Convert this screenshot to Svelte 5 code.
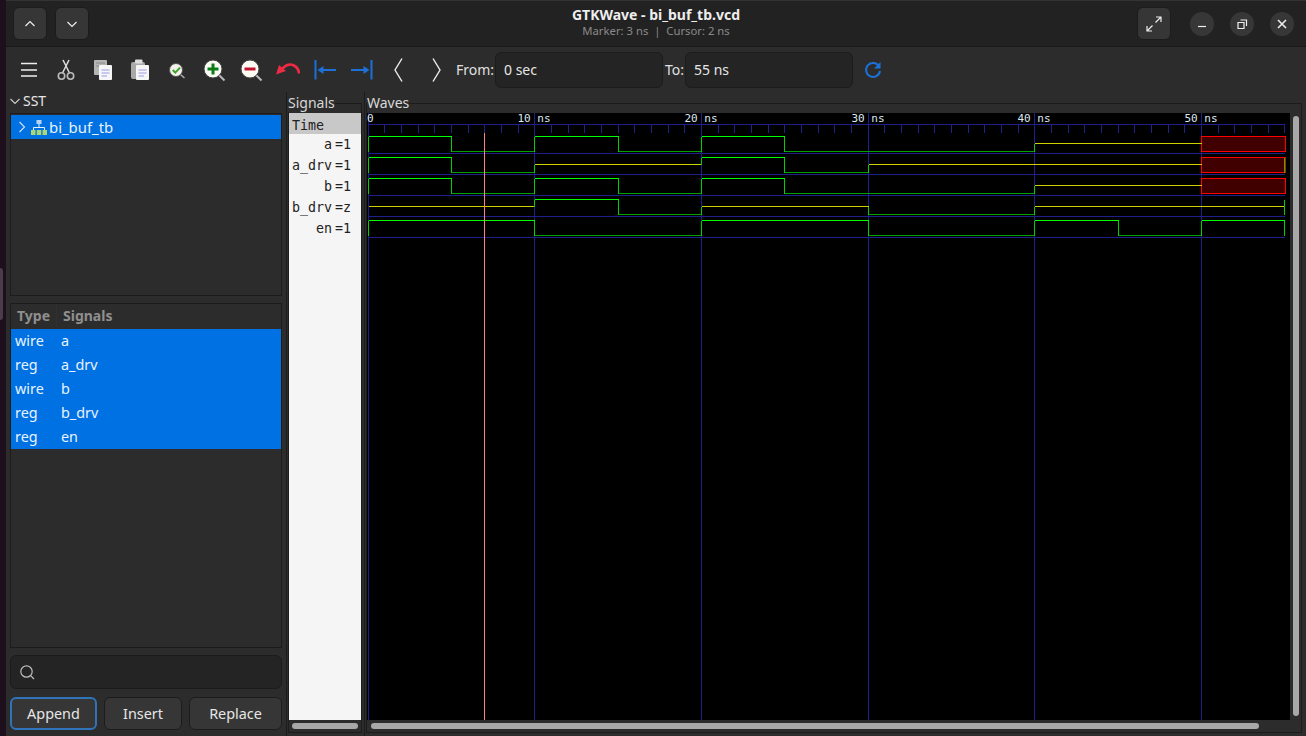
<script lang="ts">
  type Val = 0 | 1 | 'z' | 'x';
  interface Trace {
    name: string;
    type: string;
    value: string;
    steps: [number, Val][];
    endMark: boolean;
  }

  const traces: Trace[] = [
    { name: 'a', type: 'wire', value: '1', endMark: false,
      steps: [[0, 1], [5, 0], [10, 1], [15, 0], [20, 1], [25, 0], [40, 'z'], [50, 'x']] },
    { name: 'a_drv', type: 'reg', value: '1', endMark: true,
      steps: [[0, 1], [5, 0], [10, 'z'], [20, 1], [25, 0], [30, 'z'], [50, 'x']] },
    { name: 'b', type: 'wire', value: '1', endMark: false,
      steps: [[0, 1], [5, 0], [10, 1], [15, 0], [20, 1], [25, 0], [40, 'z'], [50, 'x']] },
    { name: 'b_drv', type: 'reg', value: 'z', endMark: true,
      steps: [[0, 'z'], [10, 1], [15, 0], [20, 'z'], [30, 0], [40, 'z']] },
    { name: 'en', type: 'reg', value: '1', endMark: true,
      steps: [[0, 1], [10, 0], [20, 1], [30, 0], [40, 1], [45, 0], [50, 1]] },
  ];

  const END = 55;
  const px = (t: number) => Math.floor(368 + t * 16.67) + 0.5;
  const rowY = (row: number, v: Val) => {
    const top = 136.5 + row * 21;
    if (v === 1) return top;
    if (v === 0) return top + 15;
    return top + 7;
  };

  const minorTicks = Array.from({ length: END + 1 }, (_, i) => i);
  const majorTicks = [0, 10, 20, 30, 40, 50];
  const rulerLabels = [10, 20, 30, 40, 50];
  const levelColor = { 1: '#00ff00', 0: '#00a000', z: '#d0d000' } as Record<string, string>;

  const wave = traces.map((tr, row) => {
    const flats: { x1: number; x2: number; y: number; color: string }[] = [];
    const edges: { x: number; y1: number; y2: number }[] = [];
    const boxes: { x: number; w: number; y: number; h: number }[] = [];
    tr.steps.forEach(([t, v], i) => {
      const next = i + 1 < tr.steps.length ? tr.steps[i + 1][0] : END;
      const x1 = px(t);
      const x2 = px(next);
      if (v === 'x') {
        boxes.push({ x: x1, w: x2 - x1 + 1, y: rowY(row, 1), h: 15 });
      } else {
        flats.push({ x1, x2, y: rowY(row, v), color: levelColor[v] });
        const prev = i > 0 ? tr.steps[i - 1][1] : v === 1 ? 0 : v;
        if (prev !== v) edges.push({ x: x1, y1: rowY(row, prev), y2: rowY(row, v) });
      }
    });
    if (tr.endMark) edges.push({ x: px(END), y1: rowY(row, 1), y2: rowY(row, 0) });
    return { flats, edges, boxes };
  });
</script>

<div class="screen">
  <div class="strip"><span class="notch"></span></div>
  <div class="window">
    <header class="titlebar">
      <div class="tb-left">
        <button class="hbtn" aria-label="Up">
          <svg width="16" height="16" viewBox="0 0 16 16"><path d="M3.5 10 L8 5.5 L12.5 10" class="thin" /></svg>
        </button>
        <button class="hbtn" aria-label="Down">
          <svg width="16" height="16" viewBox="0 0 16 16"><path d="M3.5 6 L8 10.5 L12.5 6" class="thin" /></svg>
        </button>
      </div>
      <div class="tb-title">
        <div class="title">GTKWave - bi_buf_tb.vcd</div>
        <div class="subtitle">Marker: 3 ns&nbsp; |&nbsp; Cursor: 2 ns</div>
      </div>
      <div class="tb-right">
        <button class="hbtn expand" aria-label="Fullscreen">
          <svg width="18" height="18" viewBox="0 0 18 18">
            <path d="M10.5 7.5 L16 2 M11 2 H16 V7 M7.5 10.5 L2 16 M2 11 V16 H7" class="thin" />
          </svg>
        </button>
        <button class="wbtn" aria-label="Minimize">
          <svg width="12" height="12" viewBox="0 0 12 12"><path d="M2 8.5 H10" class="thin" /></svg>
        </button>
        <button class="wbtn" aria-label="Maximize">
          <svg width="12" height="12" viewBox="0 0 12 12">
            <path d="M2 4.5 H8 V10.5 H2 Z M4.5 2 H10.5 V8" class="thin" />
          </svg>
        </button>
        <button class="wbtn" aria-label="Close">
          <svg width="12" height="12" viewBox="0 0 12 12"><path d="M2 2 L10 10 M10 2 L2 10" class="thick" /></svg>
        </button>
      </div>
    </header>

    <div class="toolbar">
      <button class="tool" aria-label="Menu">
        <svg width="24" height="24" viewBox="0 0 24 24"><path d="M4 5.5 H20 M4 12 H20 M4 18 H20" fill="none" stroke="#eee" stroke-width="1.6" /></svg>
      </button>
      <button class="tool" aria-label="Cut">
        <svg width="24" height="24" viewBox="0 0 24 24">
          <path d="M9 2 L15.5 15 M15 2 L8.5 15" fill="none" stroke="#ddd" stroke-width="1.5" />
          <circle cx="7.5" cy="18" r="3.2" fill="none" stroke="#bbb" stroke-width="1.6" />
          <circle cx="16.5" cy="18" r="3.2" fill="none" stroke="#bbb" stroke-width="1.6" />
        </svg>
      </button>
      <button class="tool" aria-label="Copy">
        <svg width="24" height="24" viewBox="0 0 24 24">
          <rect x="3" y="2" width="13" height="15" rx="1" fill="#b5b5b5" />
          <path d="M5 5 H14 M5 8 H14" stroke="#8a8a8a" />
          <rect x="8" y="7" width="13" height="15" rx="1" fill="#f6f6f6" />
          <path d="M10.5 12 H18.5 M10.5 15 H18.5 M10.5 18 H16" stroke="#9a9aea" />
        </svg>
      </button>
      <button class="tool" aria-label="Paste">
        <svg width="24" height="24" viewBox="0 0 24 24">
          <rect x="3" y="4" width="14" height="17" rx="2" fill="#a9a9a9" />
          <rect x="7" y="1.5" width="7.5" height="4" rx="1" fill="#dedede" />
          <rect x="8" y="7" width="13" height="15" rx="1" fill="#f6f6f6" />
          <path d="M10.5 12 H18.5 M10.5 15 H18.5 M10.5 18 H16" stroke="#9a9aea" />
        </svg>
      </button>
      <button class="tool" aria-label="Zoom fit">
        <svg width="24" height="24" viewBox="0 0 24 24">
          <path d="M15.5 16.5 L19.5 20" stroke="#aaa" stroke-width="1.6" />
          <circle cx="11" cy="12" r="6.5" fill="#f2f2ea" stroke="#555" />
          <path d="M7.8 12 L10.3 14.6 L15 9.6" fill="none" stroke="#3aa02a" stroke-width="2" />
        </svg>
      </button>
      <button class="tool" aria-label="Zoom in">
        <svg width="24" height="24" viewBox="0 0 24 24">
          <path d="M17 17 L22.5 22.5" stroke="#bbb" stroke-width="2" />
          <circle cx="11" cy="11" r="9" fill="#fbfbf4" stroke="#444" />
          <path d="M5.5 11 H16.5 M11 5.5 V16.5" stroke="#0b7d16" stroke-width="3" />
        </svg>
      </button>
      <button class="tool" aria-label="Zoom out">
        <svg width="24" height="24" viewBox="0 0 24 24">
          <path d="M17 17 L22.5 22.5" stroke="#bbb" stroke-width="2" />
          <circle cx="11" cy="11" r="9" fill="#fbfbf4" stroke="#444" />
          <path d="M5.5 11 H16.5" stroke="#c4122f" stroke-width="3" />
        </svg>
      </button>
      <button class="tool" aria-label="Undo zoom">
        <svg width="24" height="24" viewBox="0 0 24 24">
          <path d="M23 15.5 C22.5 8 14 2.5 6.5 10.5" fill="none" stroke="#ed2b45" stroke-width="2.6" />
          <path d="M0 16.5 L3 7 L10 13 Z" fill="#ed2b45" />
        </svg>
      </button>
      <button class="tool" aria-label="Go to start">
        <svg width="24" height="24" viewBox="0 0 24 24">
          <path d="M2.5 2 V21.5 M23 12 H8" fill="none" stroke="#1c71d8" stroke-width="2" />
          <path d="M4.5 12 L10.5 8 V16 Z" fill="#1c71d8" />
        </svg>
      </button>
      <button class="tool" aria-label="Go to end">
        <svg width="24" height="24" viewBox="0 0 24 24">
          <path d="M21.5 2 V21.5 M1 12 H16" fill="none" stroke="#1c71d8" stroke-width="2" />
          <path d="M19.5 12 L13.5 8 V16 Z" fill="#1c71d8" />
        </svg>
      </button>
      <button class="tool" aria-label="Shift left">
        <svg width="24" height="24" viewBox="0 0 24 24"><path d="M15 0.5 L8 12 L15 23.5" fill="none" stroke="#eee" stroke-width="1.4" /></svg>
      </button>
      <button class="tool" aria-label="Shift right">
        <svg width="24" height="24" viewBox="0 0 24 24"><path d="M9 0.5 L16 12 L9 23.5" fill="none" stroke="#eee" stroke-width="1.4" /></svg>
      </button>
      <span class="range-label from">From:</span>
      <input class="range" value="0 sec" />
      <span class="range-label to">To:</span>
      <input class="range" value="55 ns" />
      <button class="tool refresh" aria-label="Reload">
        <svg width="24" height="24" viewBox="0 0 24 24">
          <path d="M18.2 8.5 A7 7 0 1 0 19 13" fill="none" stroke="#1c71d8" stroke-width="2" />
          <path d="M19.5 4 V10.5 H13 Z" fill="#1c71d8" />
        </svg>
      </button>
    </div>

    <div class="panes">
      <aside class="sidebar">
        <div class="sst-head">
          <svg width="10" height="10" viewBox="0 0 10 10"><path d="M0.5 3 L5 7.5 L9.5 3" fill="none" stroke="#ccc" stroke-width="1.1" /></svg>
          <span>SST</span>
        </div>
        <div class="box tree">
          <div class="tree-row">
            <svg class="expander" width="8" height="12" viewBox="0 0 8 12"><path d="M1.5 1 L6.5 6 L1.5 11" fill="none" stroke="#cfe4ff" stroke-width="1.1" /></svg>
            <svg class="tree-icon" width="16" height="15" viewBox="0 0 16 15">
              <rect x="5.5" y="0" width="5" height="4" fill="#b9d7f5" />
              <path d="M8 4 V8 M2.5 10 V7.5 H13.5 V10" fill="none" stroke="#e8f0f8" />
              <rect x="0" y="10" width="4.5" height="5" fill="#a8d878" />
              <rect x="5.75" y="10" width="4.5" height="5" fill="#a8d878" />
              <rect x="11.5" y="10" width="4.5" height="5" fill="#a8d878" />
            </svg>
            <span class="tree-label">bi_buf_tb</span>
          </div>
        </div>
        <div class="hsep"></div>
        <div class="box list">
          <div class="list-head">
            <span class="col-type">Type</span>
            <span class="col-name">Signals</span>
          </div>
          {#each traces as tr}
            <div class="list-row">
              <span class="cell-type">{tr.type}</span>
              <span>{tr.name}</span>
            </div>
          {/each}
        </div>
        <div class="search">
          <svg width="17" height="17" viewBox="0 0 17 17">
            <circle cx="7.5" cy="7.5" r="5.7" fill="none" stroke="#bbb" stroke-width="1.2" />
            <path d="M11.6 11.6 L15 15" stroke="#bbb" stroke-width="1.3" />
          </svg>
        </div>
        <div class="actions">
          <button class="action append">Append</button>
          <button class="action insert">Insert</button>
          <button class="action replace">Replace</button>
        </div>
      </aside>

      <section class="signals">
        <span class="legend">Signals</span>
        <div class="frame">
          <div class="signal-list">
            <div class="time-row">Time</div>
            {#each traces as tr}
              <div class="signal-row">
                <span class="sig-name">{tr.name}</span><span class="sig-value">={tr.value}</span>
              </div>
            {/each}
          </div>
          <div class="hscroll"><span class="thumb sig-thumb"></span></div>
        </div>
      </section>

      <section class="waves">
        <span class="legend">Waves</span>
        <div class="frame">
          <div class="wave-top">
            <svg class="canvas" width="923" height="607" viewBox="367 113 923 607" shape-rendering="crispEdges">
              {#each minorTicks as t}
                <line x1={px(t)} x2={px(t)} y1="124" y2="133" stroke="#20208c" />
              {/each}
              <line x1="368" x2="1285" y1="124.5" y2="124.5" stroke="#20208c" />
              {#each majorTicks as t}
                <line x1={px(t)} x2={px(t)} y1="113" y2="720" stroke="#20208c" />
              {/each}
              {#each traces as _, row}
                <line x1="368" x2="1285" y1={153.5 + row * 21} y2={153.5 + row * 21} stroke="#20208c" />
              {/each}
              <text class="ruler" x="367" y="122">0</text>
              {#each rulerLabels as t}
                <text class="ruler" x={px(t) - 17} y="122">{t} ns</text>
              {/each}
              {#each wave as w}
                {#each w.boxes as b}
                  <rect x={b.x} y={b.y} width={b.w} height={b.h} fill="#400000" stroke="#ff0000" />
                {/each}
                {#each w.flats as f}
                  <line x1={f.x1} x2={f.x2} y1={f.y} y2={f.y} stroke={f.color} />
                {/each}
                {#each w.edges as e}
                  <line x1={e.x} x2={e.x} y1={e.y1} y2={e.y2} stroke="#00d000" />
                {/each}
              {/each}
              <line x1="484.5" x2="484.5" y1="133" y2="720" stroke="#ff8080" />
            </svg>
            <div class="vscroll"><span class="thumb v-thumb"></span></div>
          </div>
          <div class="hscroll"><span class="thumb wave-thumb"></span></div>
        </div>
      </section>
    </div>
  </div>
</div>

<style>
  :global(body) {
    margin: 0;
    background: #1d0f1c;
  }

  .screen {
    display: flex;
    width: 1306px;
    height: 736px;
    overflow: hidden;
    font-family: "Noto Sans", "Open Sans", sans-serif;
    font-size: 14px;
    color: #e6e6e6;
  }

  .strip {
    position: relative;
    width: 6px;
    flex-shrink: 0;
    background: #1d0f1c;
  }

  .notch {
    position: absolute;
    left: 0;
    top: 268px;
    width: 3px;
    height: 52px;
    background: #4a3d48;
    border-radius: 0 3px 3px 0;
  }

  .window {
    flex: 1;
    display: flex;
    flex-direction: column;
    min-width: 0;
    background: #2c2c2c;
  }

  button {
    font: inherit;
    color: inherit;
    padding: 0;
  }

  .thin {
    fill: none;
    stroke: #eee;
    stroke-width: 1.2;
  }

  .thick {
    fill: none;
    stroke: #eee;
    stroke-width: 1.6;
  }

  .titlebar {
    display: grid;
    grid-template-columns: 1fr auto 1fr;
    align-items: center;
    flex-shrink: 0;
    height: 45px;
    background: #222222;
    border-top: 1px solid #333;
    border-bottom: 1px solid #181818;
  }

  .tb-left {
    display: flex;
    gap: 8px;
    padding-left: 7px;
  }

  .tb-right {
    display: flex;
    align-items: center;
    justify-content: flex-end;
    gap: 16px;
    padding-right: 12px;
  }

  .hbtn {
    display: flex;
    align-items: center;
    justify-content: center;
    width: 34px;
    height: 33px;
    background: #363636;
    border: 1px solid #1c1c1c;
    border-radius: 6px;
  }

  .expand {
    margin-right: 3px;
  }

  .wbtn {
    display: flex;
    align-items: center;
    justify-content: center;
    width: 24px;
    height: 24px;
    background: #373737;
    border: none;
    border-radius: 50%;
  }

  .tb-title {
    text-align: center;
    line-height: 16px;
    margin-top: -1px;
  }

  .title {
    font-weight: 700;
    font-size: 14px;
    color: #eeeeee;
  }

  .subtitle {
    font-size: 11.3px;
    color: #8a8a8a;
  }

  .toolbar {
    display: flex;
    align-items: center;
    height: 45px;
    padding-left: 4px;
    flex-shrink: 0;
  }

  .tool {
    display: flex;
    align-items: center;
    justify-content: center;
    width: 37px;
    height: 37px;
    flex-shrink: 0;
    background: none;
    border: none;
  }

  .range-label {
    flex-shrink: 0;
    font-size: 14px;
    color: #e0e0e0;
  }

  .range-label.from {
    width: 39px;
    margin-left: 2px;
  }

  .range-label.to {
    width: 20px;
    margin-left: 2px;
  }

  .range {
    width: 168px;
    height: 36px;
    box-sizing: border-box;
    padding: 0 8px;
    background: #242424;
    border: 1px solid #1c1c1c;
    border-radius: 6px;
    color: #e6e6e6;
    font: inherit;
    font-size: 14px;
    outline: none;
  }

  .refresh {
    margin-left: 1px;
  }

  .panes {
    flex: 1;
    display: flex;
    min-height: 0;
  }

  .sidebar {
    width: 281px;
    flex-shrink: 0;
    box-sizing: border-box;
    display: flex;
    flex-direction: column;
    padding: 0 4px;
    border-right: 1px solid #1c1c1c;
    font-size: 14.4px;
  }

  .sst-head {
    display: flex;
    align-items: center;
    gap: 3px;
    height: 17px;
    margin-bottom: 4px;
    font-size: 14px;
  }

  .box {
    box-sizing: border-box;
    border: 1px solid #1c1c1c;
  }

  .tree {
    height: 183px;
    padding-top: 1px;
  }

  .tree-row {
    display: flex;
    align-items: center;
    height: 24px;
    padding-left: 7px;
    background: #0071e2;
    color: #e8f3ff;
  }

  .expander {
    margin-right: 5px;
  }

  .tree-icon {
    margin-right: 2px;
  }

  .tree-label {
    font-size: 14.9px;
  }

  .hsep {
    height: 7px;
    flex-shrink: 0;
  }

  .list {
    height: 345px;
  }

  .list-head {
    display: flex;
    align-items: center;
    height: 25px;
    padding-bottom: 2px;
    box-sizing: border-box;
    font-weight: 700;
    font-size: 14px;
    color: #8f8f8f;
  }

  .col-type {
    width: 46px;
    padding-left: 6px;
    box-sizing: border-box;
    border-right: 1px solid #303030;
    line-height: 23px;
  }

  .col-name {
    padding-left: 6px;
  }

  .list-row {
    display: flex;
    align-items: center;
    height: 24px;
    padding-bottom: 2px;
    box-sizing: border-box;
    background: #0071e2;
    color: #e8f3ff;
  }

  .cell-type {
    width: 50px;
    padding-left: 4px;
    box-sizing: border-box;
  }

  .search {
    display: flex;
    align-items: center;
    box-sizing: border-box;
    height: 34px;
    margin-top: 7px;
    padding-left: 8px;
    background: #242424;
    border: 1px solid #1c1c1c;
    border-radius: 6px;
  }

  .actions {
    display: flex;
    gap: 7px;
    margin-top: 8px;
  }

  .action {
    height: 33px;
    background: #363636;
    border: 1px solid #1c1c1c;
    border-radius: 6px;
    color: #e6e6e6;
  }

  .append {
    width: 87px;
    border: 2px solid #2f73b8;
  }

  .insert {
    width: 78px;
  }

  .replace {
    width: 93px;
  }

  .signals,
  .waves {
    position: relative;
    display: flex;
    flex-direction: column;
    padding-top: 11px;
    padding-bottom: 3px;
    box-sizing: border-box;
  }

  .signals {
    width: 78px;
    flex-shrink: 0;
    padding-left: 1px;
    padding-right: 2px;
    border-right: 1px solid #1c1c1c;
  }

  .waves {
    flex: 1;
    min-width: 0;
    padding-left: 1px;
    padding-right: 4px;
  }

  .legend {
    position: absolute;
    top: 2px;
    line-height: 18px;
    background: #2c2c2c;
    color: #d8d8d8;
    font-size: 14px;
  }

  .signals .legend {
    left: 1px;
  }

  .waves .legend {
    left: 2px;
  }

  .frame {
    flex: 1;
    display: flex;
    flex-direction: column;
    min-height: 0;
    padding-top: 9px;
    border: 1px solid #1c1c1c;
  }

  .signal-list {
    flex: 1;
    background: #f5f5f5;
    color: #222;
    font-family: "DejaVu Sans Mono", monospace;
    font-size: 13.3px;
  }

  .time-row {
    height: 21px;
    box-sizing: border-box;
    padding: 2px 0 0 3px;
    line-height: 22px;
    background: #c8c8c8;
  }

  .signal-row {
    display: flex;
    height: 21px;
    box-sizing: border-box;
    line-height: 21px;
  }

  .sig-name {
    width: 43px;
    text-align: right;
  }

  .sig-value {
    margin-left: 3px;
  }

  .hscroll {
    height: 12px;
    flex-shrink: 0;
    display: flex;
    align-items: center;
  }

  .thumb {
    display: block;
    background: #a8a8a8;
    border-radius: 3px;
  }

  .sig-thumb {
    width: 66px;
    height: 6px;
    margin-left: 3px;
  }

  .wave-thumb {
    width: 888px;
    height: 6px;
    margin-left: 4px;
  }

  .wave-top {
    flex: 1;
    display: flex;
    min-height: 0;
  }

  .canvas {
    display: block;
    background: #000;
    flex-shrink: 0;
  }

  .ruler {
    font-family: "DejaVu Sans Mono", monospace;
    font-size: 11px;
    fill: #dfe8f0;
    shape-rendering: auto;
  }

  .vscroll {
    flex: 1;
    display: flex;
    justify-content: center;
    padding-top: 3px;
  }

  .v-thumb {
    width: 6px;
    height: 600px;
  }
</style>
